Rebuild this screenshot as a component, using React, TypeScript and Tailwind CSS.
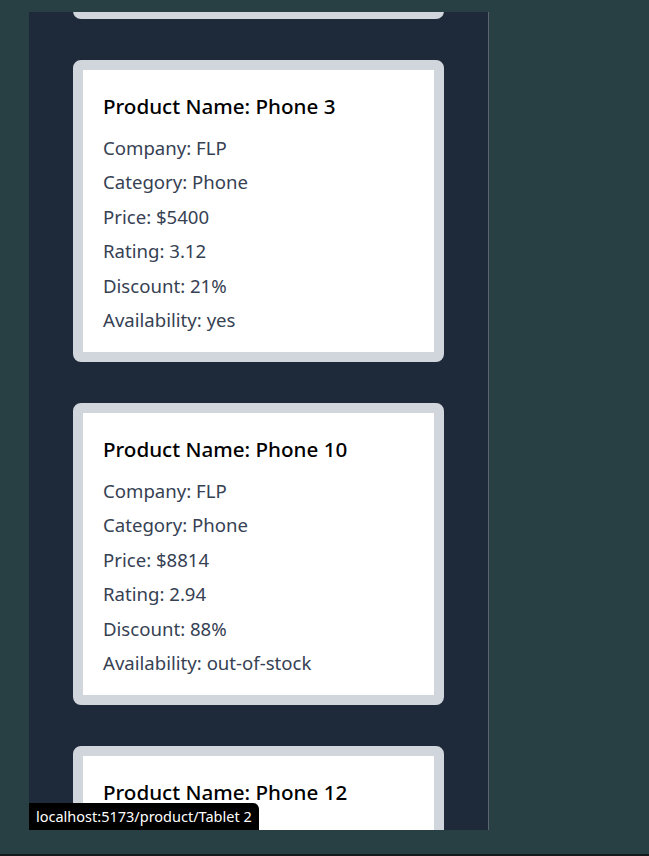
import React from 'react'

type Product = {
    name: string
    company: string
    category: string
    price: number
    rating: number
    discount: number
    availability: string
}

const products: Product[] = [
    { name: 'Phone 1', company: 'FLP', category: 'Phone', price: 2100, rating: 4.1, discount: 12, availability: 'yes' },
    { name: 'Phone 3', company: 'FLP', category: 'Phone', price: 5400, rating: 3.12, discount: 21, availability: 'yes' },
    { name: 'Phone 10', company: 'FLP', category: 'Phone', price: 8814, rating: 2.94, discount: 88, availability: 'out-of-stock' },
    { name: 'Phone 12', company: 'FLP', category: 'Phone', price: 3150, rating: 4.5, discount: 40, availability: 'yes' },
]

function ProductCard({ p }: { p: Product }) {
    return (
        <div className="shrink-0 rounded-lg border-[10px] border-gray-300 bg-white">
            <div className="px-5 pt-5 pb-[14.5px]">
                <h2 className="mb-[9px] text-[20.6px] leading-8 font-medium text-black">Product Name: {p.name}</h2>
                <p className="text-[18.6px] leading-[34.4px] text-gray-700">Company: {p.company}</p>
                <p className="text-[18.6px] leading-[34.4px] text-gray-700">Category: {p.category}</p>
                <p className="text-[18.6px] leading-[34.4px] text-gray-700">Price: ${p.price}</p>
                <p className="text-[18.6px] leading-[34.4px] text-gray-700">Rating: {p.rating}</p>
                <p className="text-[18.6px] leading-[34.4px] text-gray-700">Discount: {p.discount}%</p>
                <p className="text-[18.6px] leading-[34.4px] text-gray-700">Availability: {p.availability}</p>
            </div>
        </div>
    )
}

export default function App() {
    return (
        <div className="relative h-[856px] w-full overflow-hidden bg-[#283f43] font-['Noto_Sans','Open_Sans',sans-serif]">
            <div className="ml-[29px] mt-3 h-[818px] w-[460px] overflow-hidden border-r border-[#5b6472] bg-gray-800">
                <div className="mt-[-295px] flex flex-col gap-[41px] px-11">
                    {products.map((p) => (
                        <ProductCard key={p.name} p={p} />
                    ))}
                </div>
            </div>
            <div className="absolute left-[29px] top-[803px] rounded-tr-md bg-black px-[7px] text-[14.5px] leading-[27px] text-white">
                localhost:5173/product/Tablet 2
            </div>
            <div className="absolute bottom-0 left-0 h-[2px] w-full bg-[#141a1c]" />
        </div>
    )
}
